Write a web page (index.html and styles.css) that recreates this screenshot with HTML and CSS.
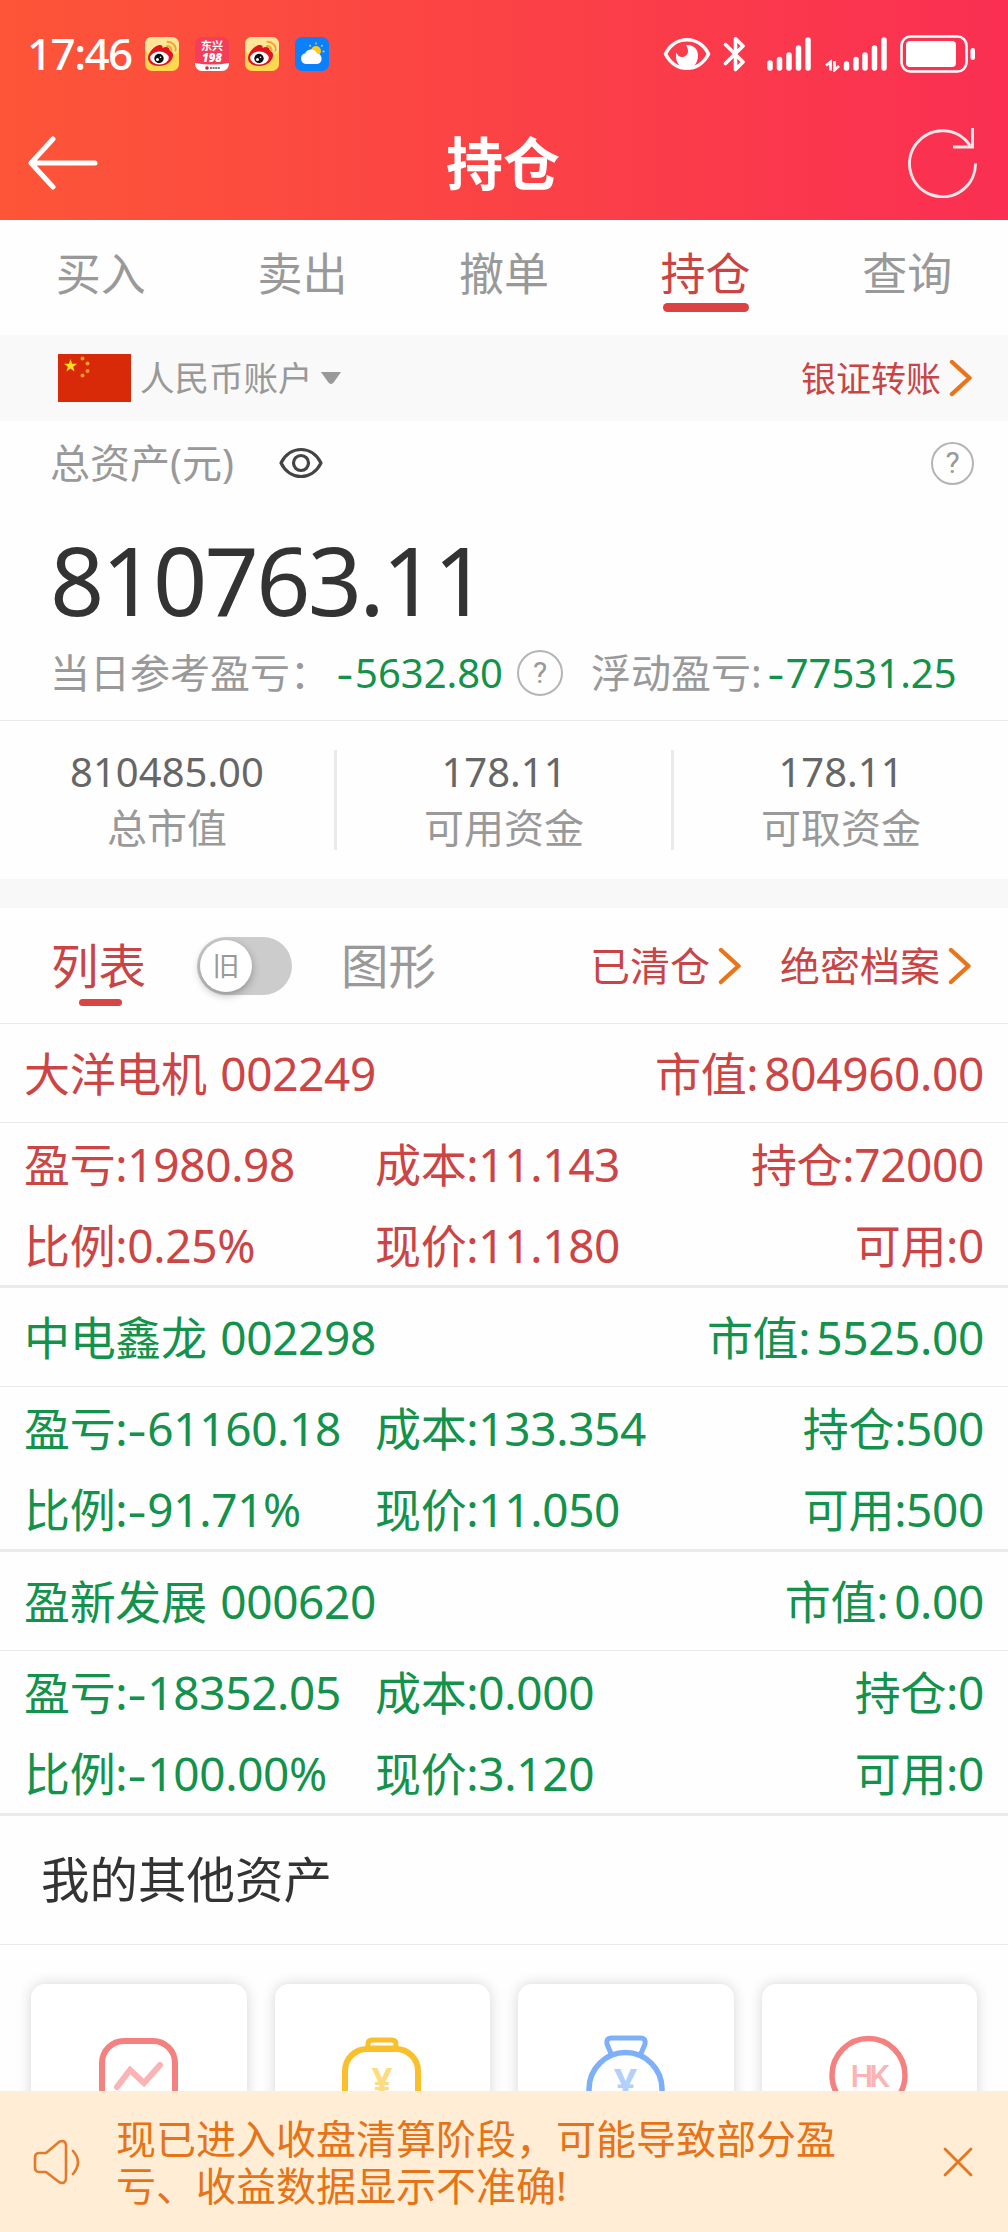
FILE: index.html
```html
<!DOCTYPE html>
<html lang="zh-CN">
<head>
    <meta charset="UTF-8">
    <meta name="viewport" content="width=device-width, initial-scale=1.0">
    <title>持仓</title>
    <link rel="stylesheet" href="styles.css">
</head>
<body>
    <!-- shared icons -->
    <svg width="0" height="0" class="defs">
        <symbol id="weibo" viewBox="0 0 34 34">
            <rect width="34" height="34" rx="7" fill="#ffd64f"/>
            <rect width="34" height="18" rx="7" fill="#ffe596"/>
            <path d="M3 21C3 16 9 9 14 8c3-.5 4 1 3.500 3 3-1.500 7-1.500 7 2 2 1 4 3 3.500 6-1 6-7 10-14 10C8 29 3 26 3 21z" fill="#e1141d"/>
            <ellipse cx="14.500" cy="21" rx="9.300" ry="6.500" fill="#fff"/>
            <circle cx="14" cy="21.500" r="4.700" fill="#111"/>
            <circle cx="12.500" cy="22.500" r="1.500" fill="#fff"/>
            <circle cx="15.500" cy="20.300" r=".8" fill="#fff"/>
            <path d="M22 9c3 0 5 2 4.500 5M22.500 4.800c5 0 9 4 8 9" fill="none" stroke="#f0a52c" stroke-width="1.900" stroke-linecap="round"/>
        </symbol>
        <symbol id="chevron" viewBox="0 0 24 38">
            <path d="M3 3l17.500 16L3 35" fill="none" stroke="#ea7419" stroke-width="4.400" stroke-linecap="round" stroke-linejoin="round"/>
        </symbol>
    </svg>

    <header class="header">
        <div class="status-bar">
            <span class="time">17:46</span>
            <div class="apps">
                <svg width="34" height="34"><use href="#weibo"/></svg>
                <svg width="34" height="34" viewBox="0 0 34 34">
                    <rect width="34" height="34" rx="7" fill="#f43d59"/>
                    <path d="M0 26q17 3 34 0v1a7 7 0 0 1-7 7H7a7 7 0 0 1-7-7z" fill="#fff"/>
                    <text x="17" y="13" class="app-text">东兴</text>
                    <text x="17" y="24.500" class="app-text app-text-bold">198</text>
                    <circle cx="12" cy="31" r="1.800" fill="#d22"/>
                    <path d="M15 31h10" stroke="#555" stroke-width="1.500" stroke-dasharray="2 .6"/>
                </svg>
                <svg width="34" height="34"><use href="#weibo"/></svg>
                <svg width="34" height="34" viewBox="0 0 34 34">
                    <rect width="34" height="34" rx="7" fill="#0b80fb"/>
                    <path d="M21 5.500v2M14.500 8l1.200 1.500M27.500 8l-1.200 1.500M29.500 14.500h-2" stroke="#ffd02e" stroke-width="1.300"/>
                    <circle cx="21" cy="14" r="5" fill="#ffc91f"/>
                    <path d="M11 27a5.500 5.500 0 0 1-.8-10.800 6.500 6.500 0 0 1 11.800.3A5.300 5.300 0 0 1 22 27z" fill="#fff"/>
                </svg>
            </div>
            <div class="system-icons">
                <svg width="48" height="34" viewBox="0 0 48 34">
                    <path d="M2.500 17C12-2 36-2 45.500 17 36 36 12 36 2.500 17z" fill="none" stroke="#fff" stroke-width="3.600" stroke-linejoin="round"/>
                    <path d="M24 8c7 0 11 4.500 11 10.500 0 6-3 10-6 12H19c-3-2-6-5.500-6-11 0-2 0-3 .5-4 1 3 3 4.500 5.500 4.500 3.500 0 6-2.500 6-6 0-2-.8-4-2-5.500z" fill="#fff"/>
                </svg>
                <svg width="24" height="38" viewBox="0 0 24 38" class="bluetooth">
                    <path d="M2.500 9.500L20 27l-7.500 7.500v-31L20 11 2.500 28.500" fill="none" stroke="#fff" stroke-width="3.600" stroke-linecap="round" stroke-linejoin="round"/>
                </svg>
                <svg width="44" height="36" viewBox="0 0 44 36" class="signal">
                    <path d="M3 27v5M12.500 23.500V32M22 19v13M31.500 12v20M41 4v28" stroke="#fff" stroke-width="5.500" stroke-linecap="round"/>
                </svg>
                <svg width="62" height="36" viewBox="0 0 62 36" class="signal2">
                    <path d="M5.500 34.500V26L1 29.500M9.500 25v9l4.500-4" fill="none" stroke="#fff" stroke-width="2.800"/>
                    <path d="M21.500 28v4M31 23.500V32M40 19v13M49.500 12v20M59 4v28" stroke="#fff" stroke-width="5.500" stroke-linecap="round"/>
                </svg>
                <svg width="76" height="38" viewBox="0 0 76 38" class="battery">
                    <rect x="1.500" y="1.500" width="65" height="35" rx="9" fill="none" stroke="#fff" stroke-width="2.600"/>
                    <rect x="6" y="6" width="50" height="26" rx="4" fill="#fff"/>
                    <rect x="70.500" y="13" width="4.500" height="12" rx="2.200" fill="#fff"/>
                </svg>
            </div>
        </div>
        <div class="nav-bar">
            <svg width="70" height="54" viewBox="0 0 70 54">
                <path d="M25 3L3 27l22 24M4 27h63" fill="none" stroke="#fff" stroke-width="5" stroke-linecap="round" stroke-linejoin="round"/>
            </svg>
            <h1>持仓</h1>
            <svg width="70" height="70" viewBox="0 0 70 70">
                <path d="M67.500 35.500A33 33 0 1 1 62 17.500" fill="none" stroke="#fff" stroke-opacity=".88" stroke-width="3"/>
                <path d="M64.500 0v19H45" fill="none" stroke="#fff" stroke-opacity=".88" stroke-width="3"/>
            </svg>
        </div>
    </header>

    <nav class="tabs">
        <a class="tab">买入</a>
        <a class="tab">卖出</a>
        <a class="tab">撤单</a>
        <a class="tab active">持仓</a>
        <a class="tab">查询</a>
    </nav>

    <div class="account-bar">
        <svg width="73" height="48" viewBox="0 0 73 48" class="flag">
            <rect width="73" height="48" fill="#d82a09"/>
            <path d="M12.500 5l1.600 4.800h5l-4 3 1.500 4.800-4.100-3-4.100 3 1.500-4.800-4-3h5z" fill="#ffe01b"/>
            <g fill="#f59a2a"><circle cx="24.500" cy="4.500" r="2"/><circle cx="29.500" cy="9.500" r="2"/><circle cx="29.500" cy="17" r="2"/><circle cx="24.500" cy="21.500" r="2"/></g>
        </svg>
        <span class="account-name">人民币账户</span>
        <svg width="20" height="13" viewBox="0 0 20 13"><path d="M0 0h20l-7 10q-3 4-6 0z" fill="#999"/></svg>
        <a class="link transfer">银证转账<svg width="24" height="38"><use href="#chevron"/></svg></a>
    </div>

    <section class="assets">
        <div class="assets-title">
            <span>总资产(元)</span>
            <svg width="44" height="32" viewBox="0 0 44 32" class="eye">
                <path d="M2 16C11-2 33-2 42 16 33 34 11 34 2 16z" fill="none" stroke="#444" stroke-width="3.200" stroke-linejoin="round"/>
                <circle cx="22" cy="16" r="7.500" fill="none" stroke="#444" stroke-width="3.200"/>
            </svg>
            <span class="help">?</span>
        </div>
        <div class="total">810763.11</div>
        <div class="profit">
            <span>当日参考盈亏：</span>
            <span class="num today"><em>-</em>5632.80</span>
            <span class="help help-big">?</span>
            <span>浮动盈亏:</span>
            <span class="num floating"><em>-</em>77531.25</span>
        </div>
    </section>

    <section class="stats">
        <div class="stat"><b>810485.00</b><span>总市值</span></div>
        <div class="stat"><b>178.11</b><span>可用资金</span></div>
        <div class="stat"><b>178.11</b><span>可取资金</span></div>
    </section>

    <div class="list-bar">
        <span class="view active">列表</span>
        <div class="switch"><div class="knob">旧</div></div>
        <span class="view">图形</span>
        <a class="link cleared">已清仓<svg width="24" height="38"><use href="#chevron"/></svg></a>
        <a class="link">绝密档案<svg width="24" height="38"><use href="#chevron"/></svg></a>
    </div>

    <section class="holding up">
        <div class="holding-head"><span>大洋电机 002249</span><span>市值:<i>804960.00</i></span></div>
        <div class="holding-body">
            <span>盈亏:1980.98</span><span>成本:11.143</span><span>持仓:72000</span>
            <span>比例:0.25%</span><span>现价:11.180</span><span>可用:0</span>
        </div>
    </section>
    <section class="holding down">
        <div class="holding-head"><span>中电鑫龙 002298</span><span>市值:<i>5525.00</i></span></div>
        <div class="holding-body">
            <span>盈亏:<em>-</em>61160.18</span><span>成本:133.354</span><span>持仓:500</span>
            <span>比例:<em>-</em>91.71%</span><span>现价:11.050</span><span>可用:500</span>
        </div>
    </section>
    <section class="holding down">
        <div class="holding-head"><span>盈新发展 000620</span><span>市值:<i>0.00</i></span></div>
        <div class="holding-body">
            <span>盈亏:<em>-</em>18352.05</span><span>成本:0.000</span><span>持仓:0</span>
            <span>比例:<em>-</em>100.00%</span><span>现价:3.120</span><span>可用:0</span>
        </div>
    </section>

    <h2>我的其他资产</h2>
    <section class="cards">
        <div class="card">
            <svg width="80" height="84" viewBox="0 0 80 84">
                <rect x="3" y="6" width="73" height="73" rx="22" fill="none" stroke="#f58080" stroke-width="6"/>
                <path d="M18 52l13-17 14 13 16-18" fill="none" stroke="#fbb3b3" stroke-width="6" stroke-linecap="round"/>
            </svg>
        </div>
        <div class="card">
            <svg width="80" height="84" viewBox="0 0 80 84">
                <rect x="3" y="14" width="73" height="67" rx="22" fill="none" stroke="#fac02c" stroke-width="6"/>
                <path d="M26 13V9q0-4 4-4h20q4 0 4 4v4z" fill="none" stroke="#fac02c" stroke-width="5"/>
                <text x="40" y="59" class="card-text yen" fill="#fddc80">¥</text>
            </svg>
        </div>
        <div class="card">
            <svg width="80" height="84" viewBox="0 0 80 84">
                <circle cx="39.500" cy="54" r="36.500" fill="none" stroke="#7eb0fa" stroke-width="5.500"/>
                <path d="M26 21l-5-12q-1-6 4-6h30q5 0 4 6l-5 12" fill="none" stroke="#7eb0fa" stroke-width="5"/>
                <text x="39.500" y="64" class="card-text yen-big" fill="#b3d0fd">¥</text>
            </svg>
        </div>
        <div class="card">
            <svg width="80" height="84" viewBox="0 0 80 84">
                <circle cx="39.500" cy="40" r="36.500" fill="none" stroke="#f58080" stroke-width="5.500"/>
                <text x="39" y="52" class="card-text hk" fill="#fbb3b3">HK</text>
            </svg>
        </div>
    </section>

    <footer class="notice">
        <svg width="48" height="46" viewBox="0 0 48 46">
            <path d="M6 14h7L26 3q6-3 7 3v34q-1 6-7 3L13 33H6q-4 0-4-5v-9q0-5 4-5zM40 12q10 11 0 23" fill="none" stroke="#e37a2b" stroke-width="2.600" stroke-linecap="round" stroke-linejoin="round"/>
        </svg>
        <p>现已进入收盘清算阶段，可能导致部分盈<br>亏、收益数据显示不准确!</p>
        <svg width="30" height="30" viewBox="0 0 30 30"><path d="M2 2l26 26M28 2L2 28" stroke="#e8741c" stroke-width="2.800" stroke-linecap="round"/></svg>
    </footer>
</body>
</html>
```
FILE: styles.css
```css
* {
    box-sizing: border-box;
}
body {
    margin: 0;
    width: 1008px;
    height: 2232px;
    display: flex;
    flex-direction: column;
    overflow: hidden;
    background: #fefefe;
    color: #999;
    font-family: "Noto Sans", "Noto Sans CJK SC", sans-serif;
    font-size: 40px;
    line-height: 1;
    white-space: nowrap;
}
body > * {
    flex-shrink: 0;
}
svg {
    display: block;
    flex-shrink: 0;
}
.defs {
    position: absolute;
}
/* minus sign */
em {
    display: inline-block;
    width: 20px;
    text-align: center;
    font-style: normal;
    transform: scaleX(1.3);
}

/* header */
.header {
    height: 220px;
    background: linear-gradient(90deg, #fd5538, #fb4444 45%, #fa2f52);
    color: #fff;
}
.status-bar {
    display: flex;
    align-items: center;
    height: 108px;
    padding-left: 27px;
    padding-right: 32px;
}
.time {
    width: 118px;
    padding-bottom: 2px;
    font-size: 44px;
    font-weight: 500;
    letter-spacing: -1.6px;
}
.apps {
    display: flex;
    gap: 16px;
}
.app-text {
    font-size: 11px;
    font-weight: 700;
    text-anchor: middle;
    fill: #fff;
}
.app-text-bold {
    font-size: 11.5px;
    font-style: italic;
    font-weight: 900;
}
.system-icons {
    display: flex;
    align-items: center;
    margin-left: auto;
}
.bluetooth {
    margin-left: 12px;
}
.signal {
    margin-left: 20px;
}
.signal2 {
    margin-left: 14px;
}
.battery {
    margin-left: 13px;
}
.nav-bar {
    display: flex;
    align-items: center;
    justify-content: space-between;
    height: 110px;
    padding: 0 30px 0 28px;
}
.nav-bar h1 {
    margin: 0;
    font-size: 57px;
    font-weight: 700;
}

/* tabs */
.tabs {
    display: flex;
    height: 115px;
}
.tab {
    display: flex;
    flex: 1;
    flex-direction: column;
    align-items: center;
    padding-top: 31px;
    font-size: 45px;
}
.tab.active {
    color: #cb4444;
}
.tab.active::after {
    content: "";
    width: 86px;
    height: 9px;
    margin-top: 7px;
    border-radius: 5px;
    background: #dd4242;
}

.account-bar {
    display: flex;
    align-items: center;
    height: 86px;
    padding: 0 35px 0 58px;
    background: #f9f9f9;
    font-size: 34.500px;
}
.account-name {
    margin: 0 8px 0 9px;
}
.link {
    display: flex;
    align-items: center;
    gap: 8px;
    color: #c94444;
}
.transfer {
    margin-left: auto;
    font-size: 35px;
}

/* total assets */
.assets {
    height: 300px;
    padding: 0 34px 0 50px;
    border-bottom: 1px solid #eaeaea;
}
.assets-title {
    display: flex;
    align-items: center;
    height: 84px;
}
.eye {
    margin-left: 45px;
}
.help {
    display: flex;
    align-items: center;
    justify-content: center;
    width: 43px;
    height: 43px;
    border: 2px solid #b5b5b5;
    border-radius: 50%;
    font-family: Roboto, sans-serif;
    font-size: 30px;
}
.assets-title .help {
    margin-left: auto;
}
.total {
    height: 126px;
    padding-top: 27px;
    color: #333;
    font-size: 95px;
    letter-spacing: -2.8px;
}
.profit {
    display: flex;
    align-items: center;
    height: 84px;
}
.num {
    color: #12924a;
}
.today {
    margin-left: 5px;
}
.help-big {
    width: 46px;
    height: 46px;
    margin: 0 28px 0 14px;
}
.floating {
    margin-left: 4px;
}

.stats {
    display: flex;
    height: 188px;
    padding: 29px 0;
    border-bottom: 29px solid #f8f8f8;
    box-sizing: content-box;
    height: 100px;
}
.stat {
    display: flex;
    flex: 1;
    flex-direction: column;
    align-items: center;
    gap: 16px;
    padding-top: 2px;
}
.stat + .stat {
    border-left: 3px solid #eaeaea;
}
.stat b {
    color: #666;
    font-weight: 400;
}

/* list / chart switch */
.list-bar {
    display: flex;
    align-items: center;
    height: 116px;
    padding: 0 36px 0 51px;
    border-bottom: 1px solid #eaeaea;
    font-size: 40px;
}
.view {
    font-size: 47.500px;
}
.view.active {
    position: relative;
    color: #cb4444;
}
.view.active::after {
    content: "";
    position: absolute;
    left: 28px;
    bottom: -17px;
    width: 43px;
    height: 7px;
    border-radius: 4px;
    background: #d94545;
}
.switch {
    width: 95px;
    height: 58px;
    margin: 0 49px 0 51px;
    padding: 3px;
    border-radius: 29px;
    background: #ccc;
}
.knob {
    display: flex;
    align-items: center;
    justify-content: center;
    width: 52px;
    height: 52px;
    border-radius: 50%;
    background: #fff;
    box-shadow: 0 3px 9px rgba(0, 0, 0, .3);
    font-size: 27px;
}
.cleared {
    margin-left: auto;
    margin-right: 38px;
}

/* holdings */
.holding {
    height: 264px;
    border-bottom: 3px solid #eaeaea;
    font-size: 46px;
    letter-spacing: -.35px;
}
.up {
    color: #cd4444;
}
.down {
    color: #12924a;
}
.holding-head {
    display: flex;
    align-items: center;
    justify-content: space-between;
    height: 99px;
    padding: 0 24px;
    border-bottom: 1px solid #eaeaea;
    word-spacing: 2px;
}
.holding i {
    margin-left: 6px;
    font-style: normal;
}
.holding-body {
    display: grid;
    grid-template-columns: 351px 1fr auto;
    grid-template-rows: 81px 81px;
    align-items: center;
    padding: 0 24px;
}
.holding-body span:nth-child(3n) {
    text-align: right;
}

h2 {
    display: flex;
    align-items: center;
    height: 129px;
    margin: 0;
    padding-left: 41px;
    padding-bottom: 2px;
    border-bottom: 1px solid #eaeaea;
    color: #333;
    font-size: 48.500px;
    font-weight: 400;
}
.cards {
    display: grid;
    grid-template-columns: repeat(4, 1fr);
    gap: 28px;
    height: 146px;
    padding: 39px 31px 0;
    overflow: hidden;
}
.card {
    display: flex;
    justify-content: center;
    height: 230px;
    padding-top: 51px;
    border-radius: 14px;
    background: #fff;
    box-shadow: 0 0 14px rgba(0, 0, 0, .16);
}
.card-text {
    font-weight: 700;
    text-anchor: middle;
}
.yen {
    font-size: 36px;
}
.yen-big {
    font-size: 41px;
}
.hk {
    font-family: Roboto, sans-serif;
    font-size: 32px;
    font-weight: 500;
    letter-spacing: -4px;
}

/* bottom notice */
.notice {
    display: flex;
    align-items: center;
    height: 141px;
    padding: 0 35px 0 33px;
    background: #ffeed5;
    color: #e67317;
    line-height: 47px;
}
.notice p {
    flex: 1;
    margin: 0 0 0 35px;
}
```
